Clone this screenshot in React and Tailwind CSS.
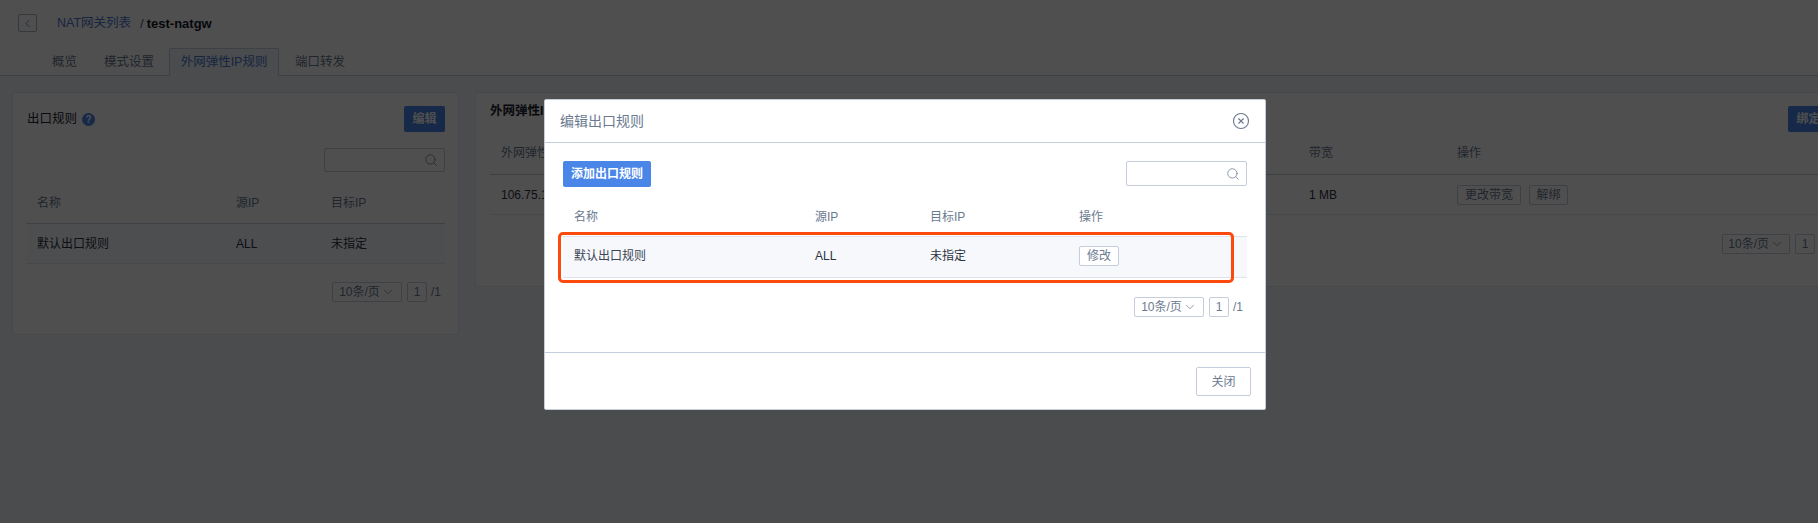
import React from 'react';
import { ChevronDown, ChevronLeft, CircleX, Search } from 'lucide-react';

const FONT = "font-['Liberation_Sans','Noto_Sans_CJK_SC',sans-serif]";

const Pager = ({ className }) => (
  <div className={`flex items-center text-[12px] text-[#6b7a90] ${className}`}>
    <div className="flex h-[20px] w-[70px] items-center justify-center gap-[1px] rounded-[2px] border border-[#c5cddc]">
      10条/页
      <ChevronDown size={14} strokeWidth={1.25} />
    </div>
    <div className="ml-[5px] flex h-[20px] w-[20px] items-center justify-center rounded-[2px] border border-[#c5cddc]">
      1
    </div>
    <span className="ml-[4px]">/1</span>
  </div>
);

const SearchBox = ({ className }) => (
  <div className={`flex w-[121px] items-center justify-end rounded-[2px] border border-[#c5cddc] bg-white pr-[6px] text-[#7f8ba0] ${className}`}>
    <Search size={14} strokeWidth={1.5} />
  </div>
);

const BlueButton = ({ children, className }) => (
  <button className={`h-[26px] rounded-[2px] bg-[#4a86e8] text-[12px] font-bold text-white ${className}`}>
    {children}
  </button>
);

const SmallButton = ({ children, className }) => (
  <button className={`h-[20px] rounded-[2px] border border-[#c5cddc] bg-white text-[12px] text-[#6b7a90] ${className}`}>
    {children}
  </button>
);

const Page = () => (
  <div className="w-[1856px]">
    {/* HEADER */}
    <div className="h-[76px] border-b border-[#c5cddc] bg-white">
      <div className="flex h-[32px] items-center pl-[18px] pt-[14px]">
        <div className="flex h-[18px] w-[19px] items-center justify-center rounded-[2px] border border-[#aab4c6] text-[#5577bb]">
          <ChevronLeft size={13} strokeWidth={1.5} />
        </div>
        <a className="ml-[20px] pt-[1px] text-[12.5px] text-[#4a78d0]">NAT网关列表</a>
        <span className="ml-[9px] pt-[1px] text-[13px] text-[#556]">/</span>
        <span className="ml-[3px] pt-[1px] text-[13px] font-bold text-[#111827]">test-natgw</span>
      </div>
      <div className="mt-[16px] flex h-[28px] items-end text-[12.5px] text-[#6b7a90]">
        <span className="ml-[52px] pb-[4px]">概览</span>
        <span className="ml-[27px] pb-[4px]">模式设置</span>
        <span className="relative ml-[15px] flex h-[28px] w-[110px] items-center justify-center rounded-t-[2px] border border-b-0 border-[#c5cddc] bg-[#f3f6fb] text-[#4a78d0]">
          外网弹性IP规则
        </span>
        <span className="ml-[16px] pb-[4px]">端口转发</span>
      </div>
    </div>

    {/* CARDS */}
    <div className="flex h-[447px] items-start gap-[16px] bg-[#f2f4f8] pl-[12px] pt-[16px]">
      <div className="w-[447px] rounded-[3px] border border-[#e6e9f0] bg-white px-[13px] pb-[32px] pt-[13px]">
        <div className="flex h-[26px] items-center justify-between">
          <div className="flex items-center pl-[1px] text-[12.5px] text-[#1c2330]">
            出口规则
            <span className="ml-[5px] flex h-[13px] w-[13px] items-center justify-center rounded-full bg-[#4a86e8] text-[10px] font-bold text-white">?</span>
          </div>
          <BlueButton className="w-[41px]">编辑</BlueButton>
        </div>
        <div className="mt-[16px] flex justify-end">
          <SearchBox className="h-[24px]" />
        </div>
        <div className="mt-[10px] grid h-[42px] grid-cols-[199px_95px_1fr] items-center border-b border-[#c5cddc] pl-[11px] text-[12px] text-[#6b7a90]">
          <span>名称</span>
          <span>源IP</span>
          <span>目标IP</span>
        </div>
        <div className="grid h-[40px] grid-cols-[199px_95px_1fr] items-center border-b border-[#e6e9f0] bg-[#f8fafd] pl-[11px] text-[12px] text-[#2a3342]">
          <span>默认出口规则</span>
          <span>ALL</span>
          <span>未指定</span>
        </div>
        <Pager className="mt-[18px] justify-end pr-[4px]" />
      </div>

      <div className="w-[1369px] rounded-[3px] border border-[#e6e9f0] bg-white px-[14px] pb-[32px] pt-[13px]">
        <div className="flex h-[26px] items-start justify-between">
          <span className="mt-[-4px] text-[12.5px] font-bold text-[#1c2330]">外网弹性IP</span>
          <BlueButton className="w-[41px]">绑定</BlueButton>
        </div>
        <div className="grid h-[43px] grid-cols-[808px_148px_1fr] items-center border-b border-[#c5cddc] pl-[11px] text-[12px] text-[#6b7a90]">
          <span>外网弹性IP</span>
          <span>带宽</span>
          <span>操作</span>
        </div>
        <div className="grid h-[40px] grid-cols-[808px_148px_1fr] items-center border-b border-[#e6e9f0] pl-[11px] text-[12px] text-[#2a3342]">
          <span>106.75.1</span>
          <span>1 MB</span>
          <div className="flex gap-[8px]">
            <SmallButton className="w-[64px]">更改带宽</SmallButton>
            <SmallButton className="w-[39px]">解绑</SmallButton>
          </div>
        </div>
        <Pager className="mt-[19px] pl-[1232px]" />
      </div>
    </div>
  </div>
);

const Modal = () => (
  <div className="absolute left-[544px] top-[99px] w-[722px] rounded-[2px] border border-[#c5cddc] bg-white">
    <div className="flex h-[43px] items-center justify-between border-b border-[#c5cddc] pl-[15px] pr-[15px]">
      <span className="text-[14px] text-[#6b7a90]">编辑出口规则</span>
      <CircleX size={18} strokeWidth={1.5} className="text-[#6b7a90]" />
    </div>
    <div className="px-[18px] pt-[18px]">
      <div className="flex items-start justify-between">
        <BlueButton className="w-[88px]">添加出口规则</BlueButton>
        <SearchBox className="h-[25px]" />
      </div>
      <div className="grid h-[49px] grid-cols-[241px_115px_149px_1fr] items-center pt-[11px] pl-[11px] text-[12px] text-[#6b7a90]">
        <span>名称</span>
        <span>源IP</span>
        <span>目标IP</span>
        <span>操作</span>
      </div>
      {/* HIGHLIGHTED ROW */}
      <div className="relative">
        <div className="grid h-[42px] grid-cols-[241px_115px_149px_1fr] items-center border-y border-[#dfe3ec] bg-[#f6f8fc] pb-[2px] pl-[11px] text-[12px] text-[#2a3342]">
          <span className="text-[#3a4454]">默认出口规则</span>
          <span>ALL</span>
          <span>未指定</span>
          <SmallButton className="w-[40px]">修改</SmallButton>
        </div>
        <div className="absolute left-[-5px] top-[-4px] h-[51px] w-[676px] rounded-[5px] border-[3px] border-[#fb4a0c]" />
      </div>
      <Pager className="mt-[19px] justify-end pr-[4px]" />
    </div>
    <div className="mt-[35px] flex h-[57px] justify-end border-t border-[#c5cddc] pr-[14px] pt-[14px]">
      <button className="h-[29px] w-[55px] rounded-[2px] border border-[#c5cddc] bg-white text-[12px] text-[#6b7a90]">
        关闭
      </button>
    </div>
  </div>
);

const App = () => (
  <div className={`relative h-[523px] w-full overflow-hidden ${FONT}`}>
    <Page />
    <div className="absolute inset-0 bg-black/[0.69]" />
    <Modal />
  </div>
);

export default App;
